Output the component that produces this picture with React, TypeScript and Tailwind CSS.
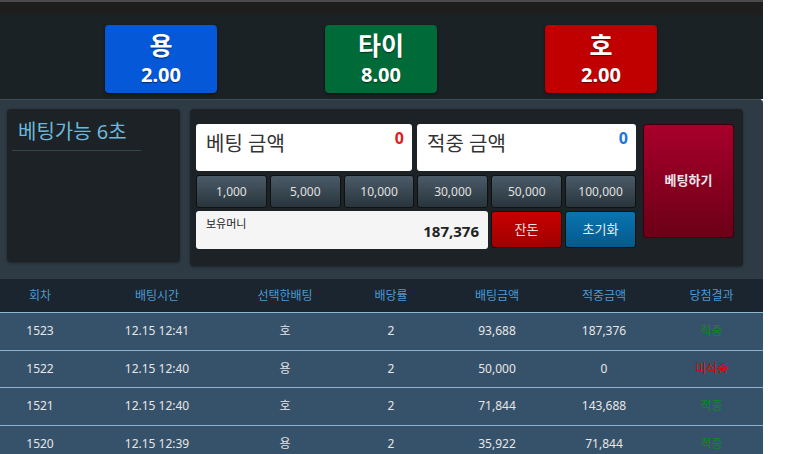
import React from 'react';

const FONT = { fontFamily: '"Noto Sans", "Noto Sans CJK KR", sans-serif' };

const odds = [
  { name: '용', rate: '2.00', bg: 'bg-[#0558d8]' },
  { name: '타이', rate: '8.00', bg: 'bg-[#006a38]' },
  { name: '호', rate: '2.00', bg: 'bg-[#c00000]' },
];

const chips = ['1,000', '5,000', '10,000', '30,000', '50,000', '100,000'];

const cols = ['w-[80px]', 'w-[154px]', 'w-[102px]', 'w-[110px]', 'w-[102px]', 'w-[112px]', 'flex-1'];
const headers = ['회차', '배팅시간', '선택한배팅', '배당률', '배팅금액', '적중금액', '당첨결과'];

const rows = [
  { no: '1523', time: '12.15 12:41', pick: '호', rate: '2', bet: '93,688', win: '187,376', hit: true },
  { no: '1522', time: '12.15 12:40', pick: '용', rate: '2', bet: '50,000', win: '0', hit: false },
  { no: '1521', time: '12.15 12:40', pick: '호', rate: '2', bet: '71,844', win: '143,688', hit: true },
  { no: '1520', time: '12.15 12:39', pick: '용', rate: '2', bet: '35,922', win: '71,844', hit: true },
];

export default function App() {
  return (
    <div className="w-[800px] h-[454px] overflow-hidden bg-white" style={FONT}>
      <div className="w-[763px]">
        {/* top strip */}
        <div className="h-[15px] bg-[#1e1e1e] border-t-2 border-[#4a4a4a]" />

        {/* odds */}
        <div className="h-[84px] bg-[#1b2226] pt-[10px] pl-[105px] flex gap-[108px]">
          {odds.map(o => (
            <div
              key={o.name}
              className={`w-[112px] h-[68px] rounded-[4px] ${o.bg} shadow-[0_1px_3px_rgba(0,0,0,0.6)] flex flex-col items-center text-white font-bold [text-shadow:0_1px_1px_rgba(0,0,0,0.5)]`}
            >
              <span className="text-[25px] leading-[26px] mt-[7px]">{o.name}</span>
              <span className="text-[20px] leading-[22px] mt-[6px]">{o.rate}</span>
            </div>
          ))}
        </div>

        {/* bet panel */}
        <div className="h-[180px] bg-[#2e3b45] border-t border-[#3c4a55] rounded-tr-[4px] flex items-start gap-[10px] pl-[7px] pt-[9px]">
          <div className="w-[173px] h-[153px] bg-[#1c2226] rounded-[4px] shadow-[0_1px_3px_rgba(0,0,0,0.4)] px-[5px] pt-[9px]">
            <div className="text-[#6ab8dc] text-[20px] leading-[28px] pl-[6px] pb-[4px] border-b border-[#36444c] w-[129px]">베팅가능 6초</div>
          </div>

          <div className="w-[553px] h-[157px] bg-[#1c2226] rounded-[4px] shadow-[0_1px_3px_rgba(0,0,0,0.4)] pl-[6px] pr-[9px] pt-[15px] flex gap-[7px]">
            <div className="w-[440px] flex flex-col">
              <div className="flex gap-[5px] h-[47px]">
                <div className="w-[216px] bg-white rounded-[3px] relative">
                  <span className="absolute left-[10px] top-[6px] text-[20px] text-[#333] leading-[28px]">베팅 금액</span>
                  <span className="absolute right-[8px] top-[2px] text-[16px] font-bold text-[#e02020]">0</span>
                </div>
                <div className="w-[219px] bg-white rounded-[3px] relative">
                  <span className="absolute left-[10px] top-[6px] text-[20px] text-[#333] leading-[28px]">적중 금액</span>
                  <span className="absolute right-[8px] top-[2px] text-[16px] font-bold text-[#1c74e0]">0</span>
                </div>
              </div>
              <div className="flex gap-[3px] mt-[4px] h-[33px]">
                {chips.map(c => (
                  <button
                    key={c}
                    className="flex-1 rounded-[3px] border border-[#111] bg-gradient-to-b from-[#4b5b68] to-[#28353d] text-[#e0e0e0] text-[12px]"
                  >
                    {c}
                  </button>
                ))}
              </div>
              <div className="flex gap-[3px] mt-[3px] h-[38px]">
                <div className="w-[292px] bg-[#f5f5f5] rounded-[3px] relative">
                  <span className="absolute left-[10px] top-[5px] text-[11px] text-[#222]">보유머니</span>
                  <span className="absolute right-[9px] top-[9px] text-[15px] font-bold text-[#222]">187,376</span>
                </div>
                <button className="w-[71px] h-[37px] rounded-[3px] border border-[#111] bg-gradient-to-b from-[#c80000] to-[#a00000] text-[#f0e0e0] text-[13px]">잔돈</button>
                <button className="w-[71px] h-[37px] rounded-[3px] border border-[#111] bg-gradient-to-b from-[#0a74b0] to-[#045a8c] text-[#e6eef5] text-[13px]">초기화</button>
              </div>
            </div>
            <button className="w-[91px] h-[114px] rounded-[3px] border border-[#3a0010] bg-gradient-to-b from-[#a8002a] to-[#6c0016] text-[#f4e6ea] text-[13px] font-bold">베팅하기</button>
          </div>
        </div>

        {/* history table */}
        <div className="h-[34px] bg-[#1a2530] flex items-center text-[#4a9ad4] text-[12px] border-b border-[#90b6d0]">
          {headers.map((h, i) => (
            <div key={h} className={`${cols[i]} text-center`}>{h}</div>
          ))}
        </div>
        {rows.map(r => (
          <div key={r.no} className="h-[37.5px] bg-[#36526a] flex items-center text-[#e6e6e6] text-[12px] border-b border-[#8ab4d0]">
            <div className={`${cols[0]} text-center`}>{r.no}</div>
            <div className={`${cols[1]} text-center`}>{r.time}</div>
            <div className={`${cols[2]} text-center`}>{r.pick}</div>
            <div className={`${cols[3]} text-center`}>{r.rate}</div>
            <div className={`${cols[4]} text-center`}>{r.bet}</div>
            <div className={`${cols[5]} text-center`}>{r.win}</div>
            <div className={`${cols[6]} text-center ${r.hit ? 'text-[#0a8a1a]' : 'text-[#e00000]'}`}>{r.hit ? '적중' : '미적중'}</div>
          </div>
        ))}
      </div>
    </div>
  );
}
